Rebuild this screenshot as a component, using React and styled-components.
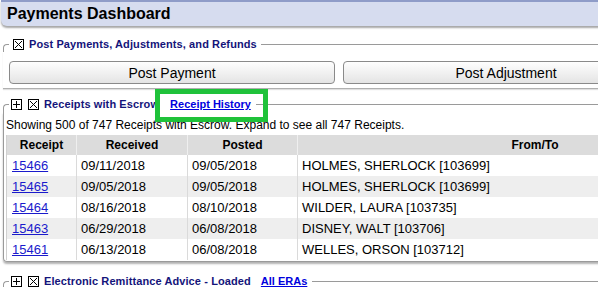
import React from "react";
import styled, { createGlobalStyle } from "styled-components";

const GlobalStyle = createGlobalStyle`
  html, body {
    margin: 0;
    padding: 0;
    background: #ffffff;
    overflow: hidden;
    font-family: "Liberation Sans", Arial, sans-serif;
  }
`;

const receipts = [
	{ id: "15466", received: "09/11/2018", posted: "09/05/2018", from: "HOLMES, SHERLOCK [103699]" },
	{ id: "15465", received: "09/05/2018", posted: "09/05/2018", from: "HOLMES, SHERLOCK [103699]" },
	{ id: "15464", received: "08/16/2018", posted: "08/10/2018", from: "WILDER, LAURA [103735]" },
	{ id: "15463", received: "06/29/2018", posted: "06/08/2018", from: "DISNEY, WALT [103706]" },
	{ id: "15461", received: "06/13/2018", posted: "06/08/2018", from: "WELLES, ORSON [103712]" },
];

function CheckBoxIcon() {
	return (
		<svg width="11" height="11" viewBox="0 0 11 11">
			<rect x="0.5" y="0.5" width="10" height="10" fill="#fff" stroke="#000" />
			<path d="M2 2L9 9M9 2L2 9" stroke="#000" strokeWidth="1" />
		</svg>
	);
}

function PlusBoxIcon() {
	return (
		<svg width="11" height="11" viewBox="0 0 11 11">
			<rect x="0.5" y="0.5" width="10" height="10" fill="#fff" stroke="#000" />
			<path d="M2 5.5H9M5.5 2V9" stroke="#000" strokeWidth="1" />
		</svg>
	);
}

function Page() {
	return (
		<Wrapper>
			<TitleBar>Payments Dashboard</TitleBar>

			<Section $top={10}>
				<LegendRow>
					<Tick $gap={4} />
					<IconSlot $gap={5}>
						<CheckBoxIcon />
					</IconSlot>
					<LegendText>Post Payments, Adjustments, and Refunds</LegendText>
					<Rule $gap={4} />
				</LegendRow>
				<ButtonArea>
					<Button>Post Payment</Button>
					<Button>Post Adjustment</Button>
				</ButtonArea>
			</Section>

			<Section $top={7}>
				<LegendRow>
					<Tick $gap={2} />
					<IconSlot $gap={6}>
						<PlusBoxIcon />
					</IconSlot>
					<IconSlot $gap={5}>
						<CheckBoxIcon />
					</IconSlot>
					<LegendText>Receipts with Escrow</LegendText>
					<LegendLink $left={11}>
						Receipt History
						<Highlight />
					</LegendLink>
					<Rule $gap={5} />
				</LegendRow>
				<BoxBody>
					<Note>
						Showing 500 of 747 Receipts with Escrow. Expand to see all 747 Receipts.
					</Note>
					<Table>
						<thead>
							<tr>
								<Th $w={69}>Receipt</Th>
								<Th $w={110}>Received</Th>
								<Th $w={109}>Posted</Th>
								<Th>From/To</Th>
							</tr>
						</thead>
						<tbody>
							{receipts.map((r, index) => (
								<Row key={r.id} $alt={index % 2 === 1}>
									<Td $first>
										<NumLink href="#">{r.id}</NumLink>
									</Td>
									<Td>{r.received}</Td>
									<Td>{r.posted}</Td>
									<Td>{r.from}</Td>
								</Row>
							))}
						</tbody>
					</Table>
				</BoxBody>
			</Section>

			<Section $top={11}>
				<LegendRow>
					<Tick $gap={2} />
					<IconSlot $gap={6}>
						<PlusBoxIcon />
					</IconSlot>
					<IconSlot $gap={5}>
						<CheckBoxIcon />
					</IconSlot>
					<LegendText>Electronic Remittance Advice - Loaded</LegendText>
					<LegendLink $left={10}>All ERAs</LegendLink>
					<Rule $gap={5} />
				</LegendRow>
			</Section>
		</Wrapper>
	);
}

const Wrapper = styled.div`
	width: 1010px;
	display: flex;
	flex-direction: column;
`;

const TitleBar = styled.div`
	height: 24px;
	margin: 0 1px;
	padding-left: 6px;
	display: flex;
	align-items: center;
	background: #d6dcef;
	border-top: 2px solid #8f9cc8;
	border-radius: 0 0 6px 6px;
	box-shadow: 0 2px 2px rgba(0, 0, 0, 0.35);
	font-size: 16px;
	font-weight: bold;
	color: #000;
`;

const Section = styled.div`
	margin-top: ${({ $top }) => $top}px;
	margin-left: 3px;
	display: flex;
	flex-direction: column;
`;

const LegendRow = styled.div`
	height: 16px;
	display: flex;
	align-items: center;
	white-space: nowrap;
`;

const Tick = styled.span`
	align-self: flex-end;
	width: 6px;
	height: 8px;
	border-top: 1px solid #9a9a9a;
	border-left: 1px solid #9a9a9a;
	border-top-left-radius: 4px;
	box-sizing: border-box;
	margin-right: ${({ $gap }) => $gap}px;
`;

const IconSlot = styled.span`
	display: flex;
	margin-right: ${({ $gap }) => $gap}px;
`;

const LegendText = styled.span`
	font-size: 11px;
	font-weight: bold;
	color: #14147a;
	letter-spacing: 0.1px;
`;

const LegendLink = styled.a`
	position: relative;
	margin-left: ${({ $left }) => $left}px;
	font-size: 11px;
	font-weight: bold;
	color: #0000dd;
	text-decoration: underline;
	line-height: 16px;
`;

const Highlight = styled.span`
	position: absolute;
	left: -15px;
	right: -17px;
	top: -7px;
	bottom: -10px;
	border: 5px solid #1fc23a;
	pointer-events: none;
`;

const Rule = styled.span`
	flex: 1;
	height: 1px;
	background: #9a9a9a;
	margin-left: ${({ $gap }) => $gap}px;
`;

const ButtonArea = styled.div`
	display: flex;
	gap: 8px;
	padding: 9px 0 4px 6px;
	border-bottom: 1px solid #b0b0b0;
	box-shadow: 0 1px 1px rgba(0, 0, 0, 0.12);
`;

const Button = styled.button`
	width: 326px;
	height: 23px;
	flex-shrink: 0;
	border: 1px solid #8a8a8a;
	border-radius: 4px;
	background: linear-gradient(#fefefe, #e4e4e4);
	font-family: "Liberation Sans", Arial, sans-serif;
	font-size: 14px;
	color: #000;
	padding: 0;
`;

const BoxBody = styled.div`
	border-left: 1px solid #9a9a9a;
	border-right: 1px solid #9a9a9a;
	border-bottom: 1px solid #9a9a9a;
	border-radius: 0 0 4px 4px;
	box-shadow: 0 2px 2px rgba(0, 0, 0, 0.3);
	padding: 5px 0 1px 2px;
`;

const Note = styled.div`
	font-size: 12px;
	line-height: 16px;
	color: #000;
	margin-bottom: 2px;
`;

const Table = styled.table`
	width: 766px;
	border-collapse: collapse;
	border-left: 1px solid #d0d0d0;
	table-layout: fixed;
`;

const Th = styled.th`
	width: ${({ $w }) => ($w ? `${$w}px` : "auto")};
	height: 20px;
	padding: 0;
	background: #dcdcdc;
	border-left: 1px solid #efefef;
	font-size: 12px;
	font-weight: bold;
	color: #000;
	text-align: center;
	&:first-child {
		border-left: none;
	}
`;

const Row = styled.tr`
	background: ${({ $alt }) => ($alt ? "#eeeeee" : "#ffffff")};
`;

const Td = styled.td`
	height: 21px;
	padding: 0 0 0 ${({ $first }) => ($first ? 5 : 4)}px;
	border-left: 1px solid #dadada;
	font-size: 13px;
	color: #000;
	white-space: nowrap;
	&:first-child {
		border-left: none;
	}
`;

const NumLink = styled.a`
	color: #1a1acc;
	text-decoration: underline;
`;

export default function App() {
	return (
		<>
			<GlobalStyle />
			<Page />
		</>
	);
}
